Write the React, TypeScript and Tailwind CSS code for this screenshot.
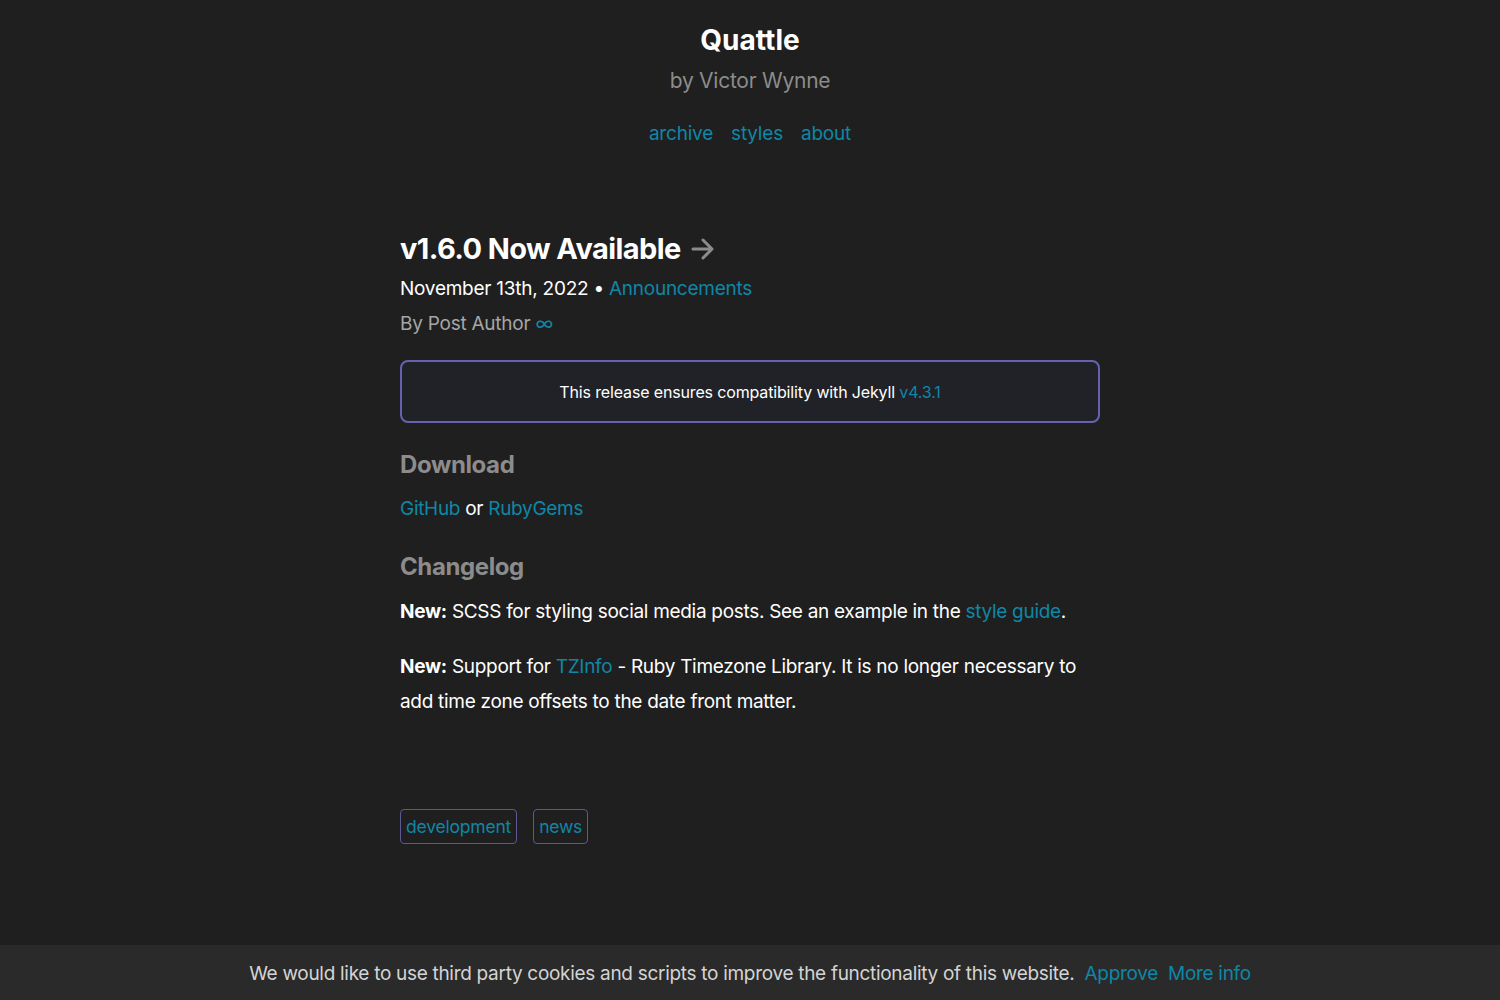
const link = "text-[#0e87a7]";

const Tag = ({ label }: { label: string }) => (
  <a className={`rounded-[4px] border border-[#5c5894] px-[5px] py-[4px] text-[17.5px] leading-[25px] tracking-[-0.2px] ${link}`}>
    {label}
  </a>
);

export default function App() {
  return (
    <div className="relative min-h-[1000px] bg-[#1f1f1f] font-['Inter',sans-serif] text-white">
      <header className="flex flex-col items-center pt-[22px]">
        <h1 className="text-[28px] font-bold leading-[36px]">Quattle</h1>
        <p className="mt-[9px] text-[21px] leading-[28px] tracking-[-0.25px] text-[#8c8c8c]">by Victor Wynne</p>
        <nav className={`mt-[26px] flex gap-[18px] text-[19px] leading-[26px] tracking-[-0.2px] ${link}`}>
          <a>archive</a>
          <a>styles</a>
          <a>about</a>
        </nav>
      </header>

      <main className="mx-auto mt-[83px] w-[700px]">
        <h2 className="flex items-center gap-[10px] text-[29px] font-bold leading-[38px] tracking-[-0.6px]">
          v1.6.0 Now Available
          <svg width="24" height="22" viewBox="0 0 24 22" fill="none" stroke="#8c8c8c" strokeWidth="3" strokeLinecap="round" strokeLinejoin="round">
            <path d="M2 11h19M12 2l9 9-9 9" />
          </svg>
        </h2>
        <p className="mt-[8px] text-[19px] leading-[26px] tracking-[-0.25px]">
          November 13th, 2022 • <a className={link}>Announcements</a>
        </p>
        <p className="mt-[9px] text-[19px] leading-[26px] tracking-[-0.25px] text-[#a6a6a6]">
          By Post Author <span className={link}>∞</span>
        </p>

        <div className="mt-[23px] flex h-[63px] items-center justify-center rounded-[8px] border-2 border-[#6762b0] bg-[#212228] text-[16px] tracking-[-0.15px]">
          <span>
            This release ensures compatibility with Jekyll <a className={link}>v4.3.1</a>
          </span>
        </div>

        <h3 className="mt-[26px] text-[24px] font-bold leading-[32px] tracking-[-0.4px] text-[#8c8c8c]">Download</h3>
        <p className="mt-[15px] text-[19px] leading-[26px] tracking-[-0.3px]">
          <a className={link}>GitHub</a> or <a className={link}>RubyGems</a>
        </p>

        <h3 className="mt-[29px] text-[24px] font-bold leading-[32px] tracking-[-0.4px] text-[#8c8c8c]">Changelog</h3>
        <p className="mt-[11px] text-[19px] leading-[35px] tracking-[-0.3px]">
          <b>New:</b> SCSS for styling social media posts. See an example in the{" "}
          <a className={link}>style guide</a>.
        </p>
        <p className="mt-[20px] text-[19px] leading-[35px] tracking-[-0.3px]">
          <b>New:</b> Support for <a className={link}>TZInfo</a> - Ruby Timezone Library. It is no longer
          necessary to add time zone offsets to the date front matter.
        </p>

        <div className="mt-[90px] flex gap-[16px]">
          <Tag label="development" />
          <Tag label="news" />
        </div>
      </main>

      <div className="absolute inset-x-0 bottom-0 flex h-[55px] items-center justify-center gap-[10px] bg-[#2a2a2a] pt-[4px] text-[19px] tracking-[-0.3px] text-[#d4d4d4]">
        <span>We would like to use third party cookies and scripts to improve the functionality of this website.</span>
        <a className={link}>Approve</a>
        <a className={link}>More info</a>
      </div>
    </div>
  );
}
